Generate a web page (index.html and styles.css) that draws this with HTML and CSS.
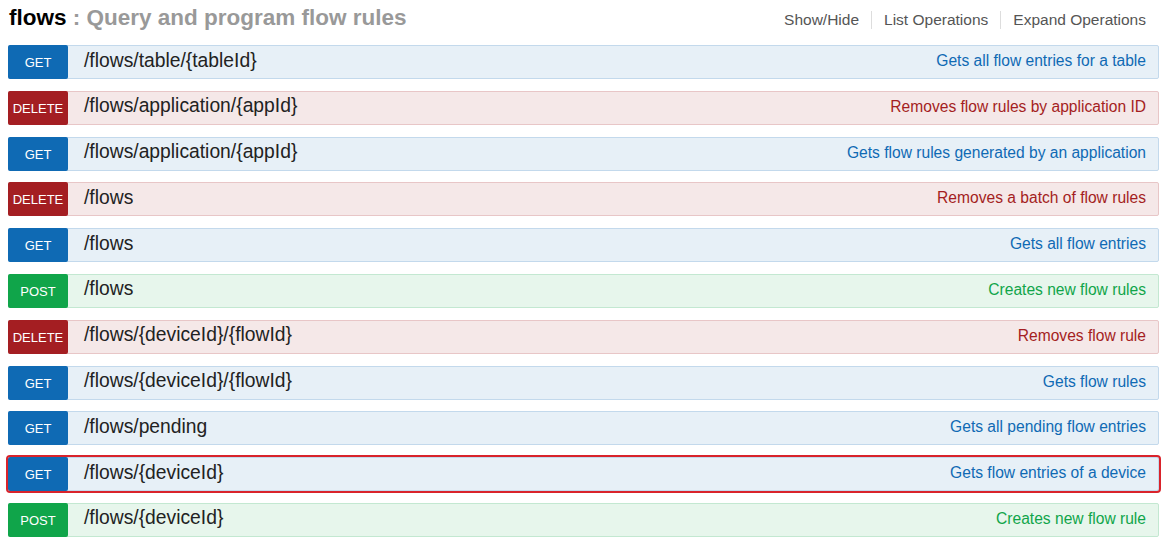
FILE: index.html
```html
<!DOCTYPE html>
<html>
<head>
<meta charset="utf-8">
<link rel="stylesheet" href="styles.css">
</head>
<body>
<div class="resource">
  <div class="heading">
    <h2 class="title"><span class="name">flows</span><span class="sub"> : Query and program flow rules</span></h2>
    <ul class="options">
      <li><a>Show/Hide</a></li>
      <li><a>List Operations</a></li>
      <li><a>Expand Operations</a></li>
    </ul>
  </div>
  <ul class="ops">
    <li class="op get"><span class="method">GET</span><span class="path">/flows/table/{tableId}</span><span class="desc">Gets all flow entries for a table</span></li>
    <li class="op delete"><span class="method">DELETE</span><span class="path">/flows/application/{appId}</span><span class="desc">Removes flow rules by application ID</span></li>
    <li class="op get"><span class="method">GET</span><span class="path">/flows/application/{appId}</span><span class="desc">Gets flow rules generated by an application</span></li>
    <li class="op delete"><span class="method">DELETE</span><span class="path">/flows</span><span class="desc">Removes a batch of flow rules</span></li>
    <li class="op get"><span class="method">GET</span><span class="path">/flows</span><span class="desc">Gets all flow entries</span></li>
    <li class="op post"><span class="method">POST</span><span class="path">/flows</span><span class="desc">Creates new flow rules</span></li>
    <li class="op delete"><span class="method">DELETE</span><span class="path">/flows/{deviceId}/{flowId}</span><span class="desc">Removes flow rule</span></li>
    <li class="op get"><span class="method">GET</span><span class="path">/flows/{deviceId}/{flowId}</span><span class="desc">Gets flow rules</span></li>
    <li class="op get"><span class="method">GET</span><span class="path">/flows/pending</span><span class="desc">Gets all pending flow entries</span></li>
    <li class="op get selected"><span class="method">GET</span><span class="path">/flows/{deviceId}</span><span class="desc">Gets flow entries of a device</span></li>
    <li class="op post"><span class="method">POST</span><span class="path">/flows/{deviceId}</span><span class="desc">Creates new flow rule</span></li>
  </ul>
</div>
</body>
</html>
```

FILE: styles.css
```css
* { box-sizing: border-box; }
html, body { margin: 0; padding: 0; background: #fff; }
body { font-family: "Liberation Sans", Arial, sans-serif; color: #333; }

.resource { padding: 0 12px 0 8px; }

.heading {
  height: 36px;
  display: flex;
  align-items: center;
  justify-content: space-between;
  margin-bottom: 9px;
}
.title { margin: 0 0 0 1px; font-size: 22.5px; font-weight: bold; line-height: 26px; }
.title .name { color: #000; }
.title .sub { color: #999; }

.options { list-style: none; margin: 0; padding: 4px 13px 0 0; display: flex; }
.options li { font-size: 15.5px; color: #555; padding: 0 12px; border-left: 1px solid #ddd; line-height: 18px; }
.options li:first-child { border-left: none; }
.options li:last-child { padding-right: 0; }

.ops { list-style: none; margin: 0; padding: 0; display: flex; flex-direction: column; gap: 11.8px; }

.op {
  height: 34px;
  display: flex;
  align-items: center;
  border: 1px solid;
  border-radius: 2px;
  position: relative;
}
.method {
  width: 60px;
  align-self: stretch;
  margin: -1px 0 -1px -1px;
  border-radius: 2px;
  color: #fff;
  font-size: 13px;
  display: flex;
  align-items: center;
  justify-content: center;
  padding-top: 1px;
}
.path { margin-left: 16px; font-size: 19.3px; color: #222; flex: 1; padding-bottom: 3px; }
.desc { font-size: 15.6px; padding-right: 12px; padding-bottom: 2px; }

.get { background: #e7f0f7; border-color: #c3d9ec; }
.get .method { background: #0f6ab4; }
.get .desc { color: #0f6ab4; }

.delete { background: #f5e8e8; border-color: #e8c6c7; }
.delete .method { background: #a41e22; }
.delete .desc { color: #a41e22; }

.post { background: #e7f6ec; border-color: #c3e8d1; }
.post .method { background: #10a54a; }
.post .desc { color: #10a54a; }

.selected { outline: 2px solid #d9232b; outline-offset: 0; }
```
